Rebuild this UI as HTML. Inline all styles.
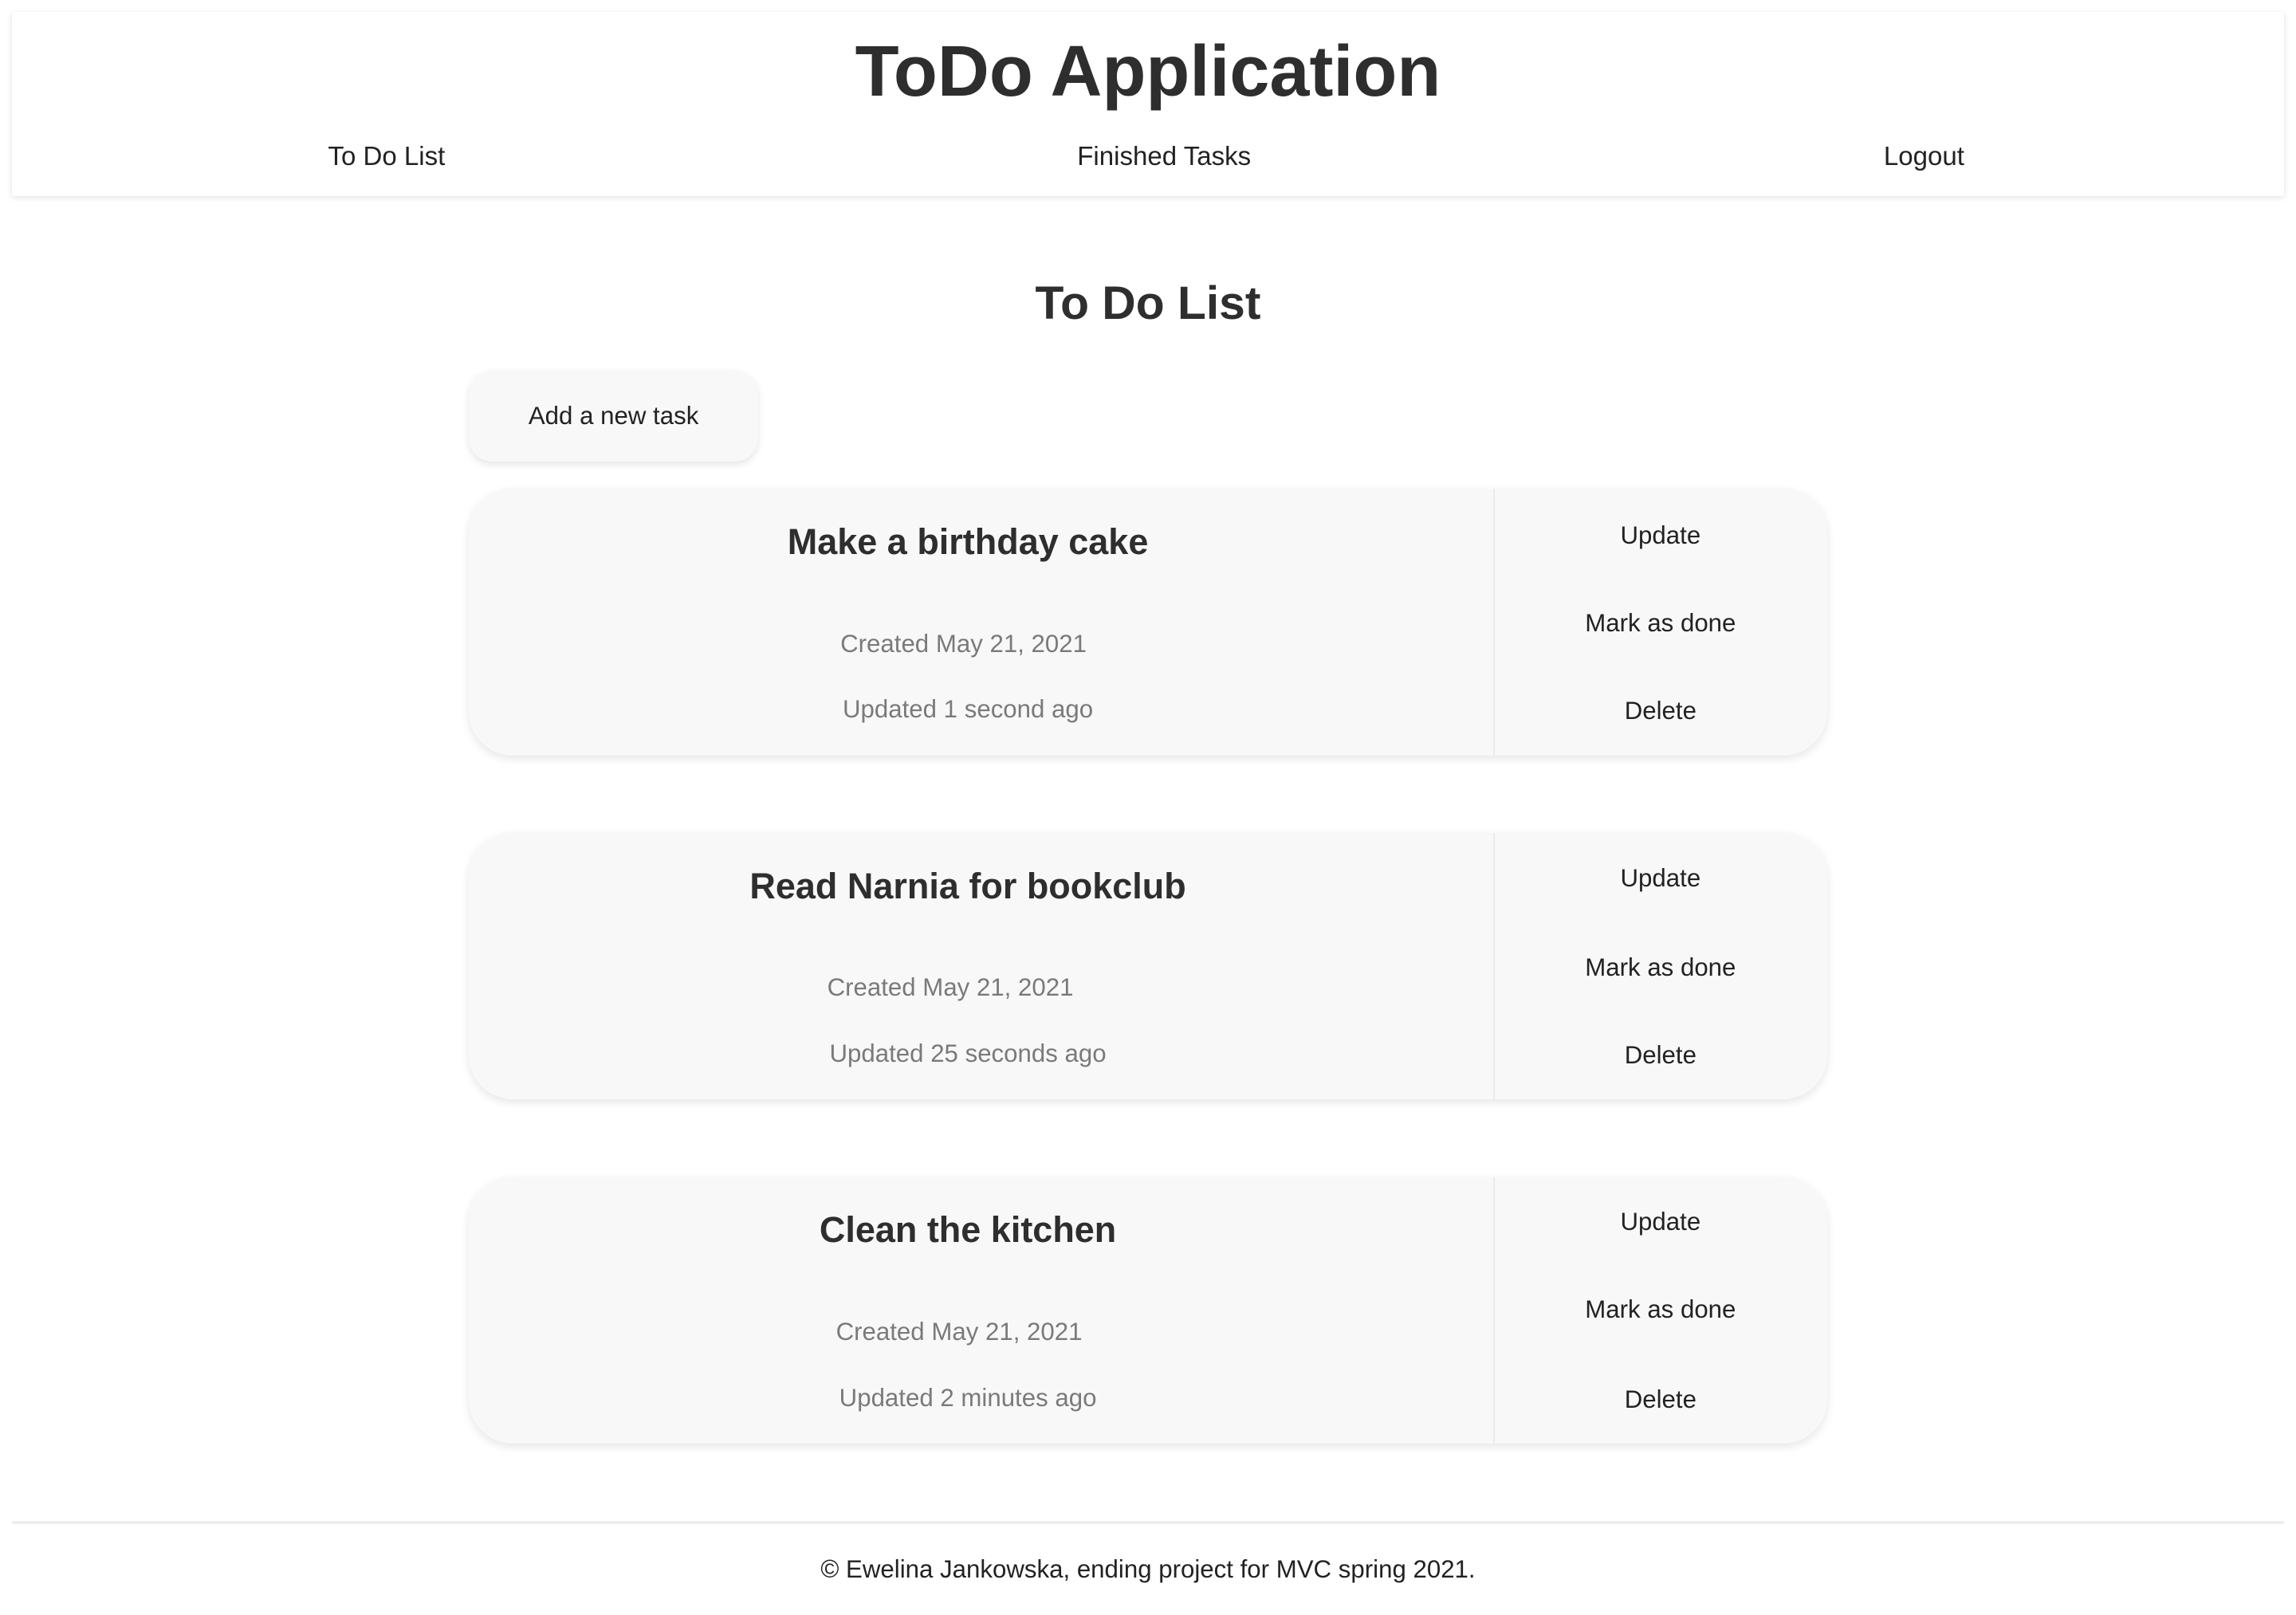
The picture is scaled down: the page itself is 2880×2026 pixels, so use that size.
<!DOCTYPE html>
<html><head><meta charset="utf-8"><style>
html{zoom:1.83673}
body{margin:0;width:1568px;height:1103px;position:relative;background:#fff;font-family:"Liberation Sans",sans-serif;color:#222;overflow:hidden}
.a{position:absolute;white-space:nowrap}
.c{transform:translateX(-50%)}
.hdr{position:absolute;left:8px;top:8px;width:1552px;height:126px;background:#fff;box-shadow:0 1px 4px rgba(0,0,0,.12)}
.card{position:absolute;left:320px;width:928px;height:182px;background:#f8f8f8;border-radius:30px;box-shadow:0 2px 6px rgba(0,0,0,.1)}
.div{position:absolute;left:700px;top:0;width:1px;height:100%;background:#ebebeb}
.t{font-size:24.5px;font-weight:bold;color:#2e2e2e}
.m{font-size:17px;color:#7a7a7a}
.b{font-size:17px;color:#222}
</style></head><body>
<div class="hdr"></div>
<div class="a c" style="left:784px;top:21px;font-size:49px;font-weight:bold;color:#2e2e2e">ToDo Application</div>
<div class="a c" style="left:264px;top:97px;font-size:18px">To Do List</div>
<div class="a c" style="left:795px;top:97px;font-size:18px">Finished Tasks</div>
<div class="a c" style="left:1314px;top:97px;font-size:18px">Logout</div>
<div class="a c" style="left:784px;top:189px;font-size:32px;font-weight:bold;color:#2e2e2e">To Do List</div>
<div class="a" style="left:320px;top:253px;width:198px;height:62px;background:#f8f8f8;border-radius:16px;box-shadow:0 2px 5px rgba(0,0,0,.1);font-size:17px;line-height:62px;text-align:center">Add a new task</div>

<div class="card" style="top:334px"><div class="div"></div>
<div class="a c t" style="left:341px;top:22px">Make a birthday cake</div>
<div class="a c m" style="left:338px;top:96px">Created May 21, 2021</div>
<div class="a c m" style="left:341px;top:141px">Updated 1 second ago</div>
<div class="a c b" style="left:814px;top:22px">Update</div>
<div class="a c b" style="left:814px;top:82px">Mark as done</div>
<div class="a c b" style="left:814px;top:142px">Delete</div></div>

<div class="card" style="top:569px"><div class="div"></div>
<div class="a c t" style="left:341px;top:22px">Read Narnia for bookclub</div>
<div class="a c m" style="left:329px;top:96px">Created May 21, 2021</div>
<div class="a c m" style="left:341px;top:141px">Updated 25 seconds ago</div>
<div class="a c b" style="left:814px;top:21px">Update</div>
<div class="a c b" style="left:814px;top:82px">Mark as done</div>
<div class="a c b" style="left:814px;top:142px">Delete</div></div>

<div class="card" style="top:804px"><div class="div"></div>
<div class="a c t" style="left:341px;top:22px">Clean the kitchen</div>
<div class="a c m" style="left:335px;top:96px">Created May 21, 2021</div>
<div class="a c m" style="left:341px;top:141px">Updated 2 minutes ago</div>
<div class="a c b" style="left:814px;top:21px">Update</div>
<div class="a c b" style="left:814px;top:81px">Mark as done</div>
<div class="a c b" style="left:814px;top:142px">Delete</div></div>

<div class="a" style="left:8px;top:1039px;width:1552px;height:2px;background:#eee"></div>
<div class="a c" style="left:784px;top:1062px;font-size:17px">© Ewelina Jankowska, ending project for MVC spring 2021.</div>
</body></html>
